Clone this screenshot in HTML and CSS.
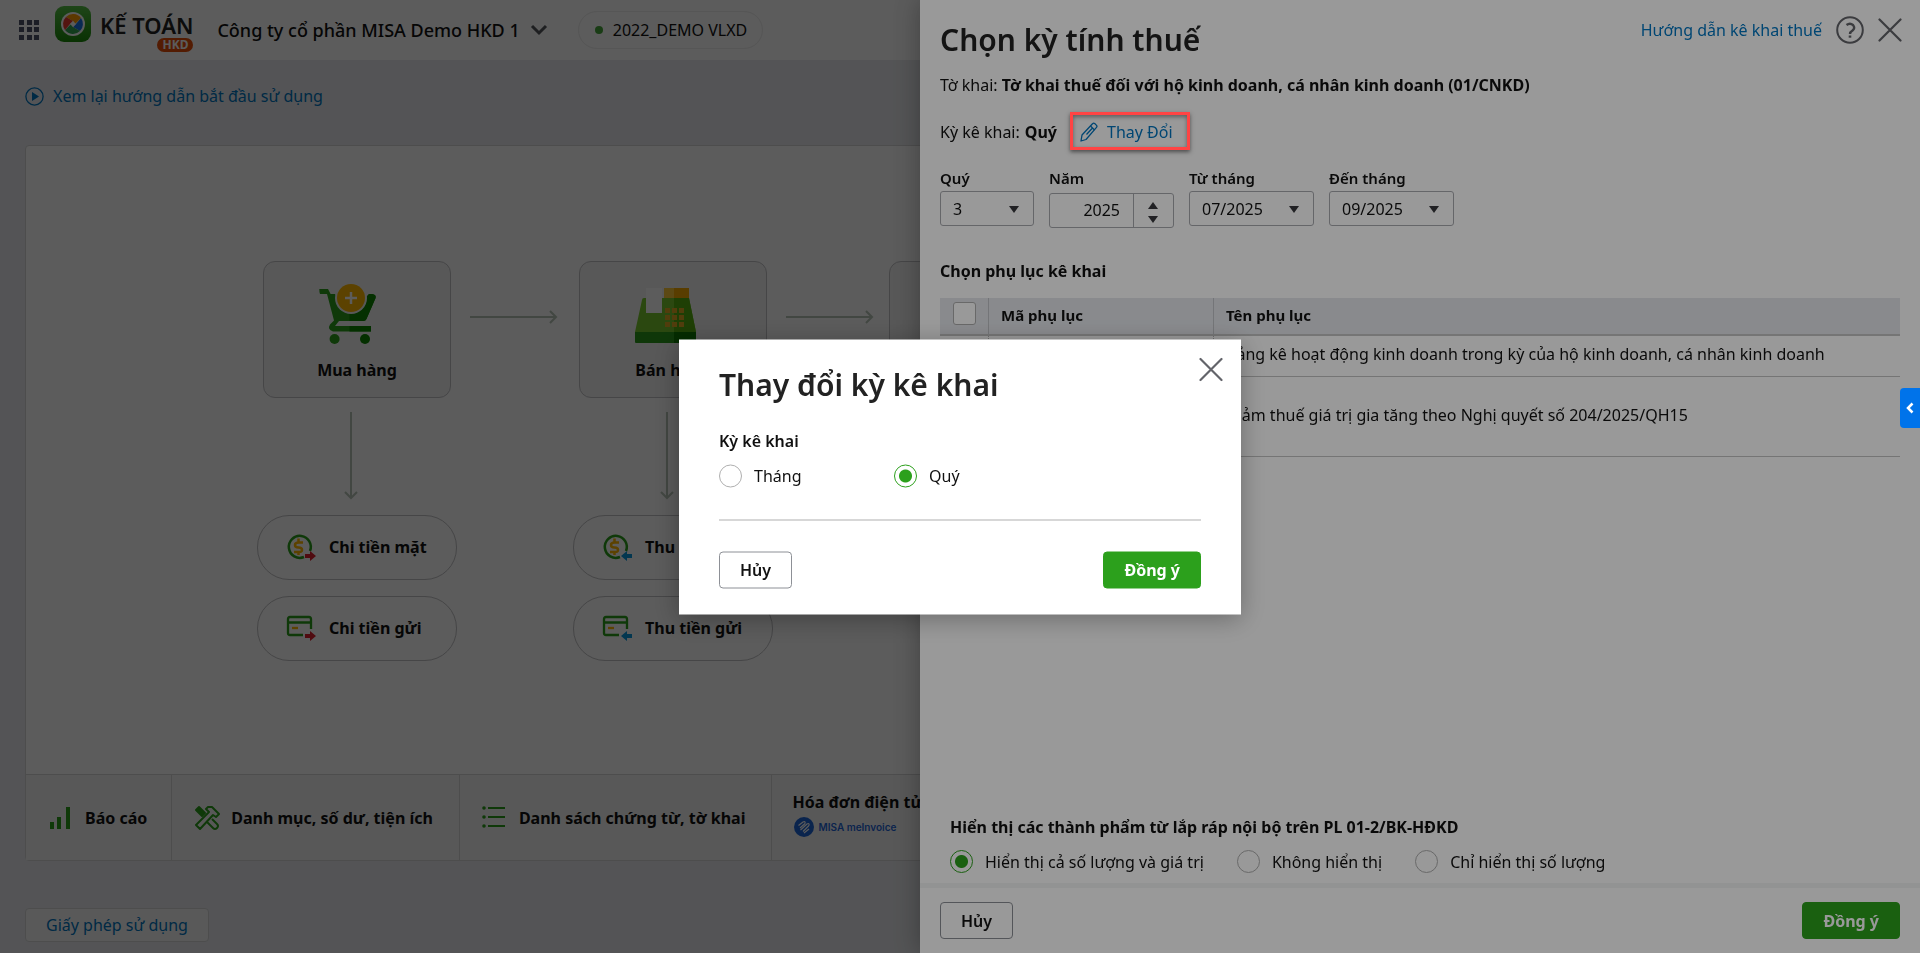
FILE: index.html
```html
<!DOCTYPE html>
<html lang="vi">
<head>
    <meta charset="utf-8">
    <title>Kế toán HKD</title>
    <link rel="stylesheet" href="styles.css">
</head>
<body>
<div class="page">
    <header class="topbar">
        <button class="icon-btn" aria-label="Menu">
            <svg width="22" height="22" viewBox="0 0 22 22" fill="#50556b"><path d="M1 1h5v5H1zM9 1h5v5H9zM16 1h5v5h-5zM1 8h5v5H1zM9 8h5v5H9zM16 8h5v5h-5zM1 16h5v5H1zM9 16h5v5H9zM16 16h5v5h-5z"/></svg>
        </button>
        <a class="logo" href="#">
            <svg width="36" height="36" viewBox="0 0 36 36">
                <defs><linearGradient id="lg" x1="0" y1="0" x2="0" y2="1"><stop offset="0" stop-color="#57c146"/><stop offset="1" stop-color="#1c8a0a"/></linearGradient></defs>
                <rect width="36" height="36" rx="9" fill="url(#lg)"/>
                <circle cx="18" cy="18" r="12" fill="#fff"/>
                <g transform="translate(18 18)">
                    <path d="M-7 -7A10 10 0 0 1 8 -6L2 0 0 -3z" fill="#ff9d00"/>
                    <path d="M8 -6A10 10 0 0 1 7 7L0 3 3 0z" fill="#1a73e8"/>
                    <path d="M7 7A10 10 0 0 1 -8 6L-2 0 0 3z" fill="#34a853"/>
                    <path d="M-8 6A10 10 0 0 1 -7 -7L0 -3 -3 0z" fill="#ea3d2f"/>
                    <path d="M0 -3L3 0 0 3 -3 0z" fill="#fff"/>
                </g>
            </svg>
            <span class="logo-text"><span class="logo-name">KẾ TOÁN</span><span class="logo-badge">HKD</span></span>
        </a>
        <button class="company">Công ty cổ phần MISA Demo HKD 1
            <svg width="18" height="12" viewBox="0 0 18 12" fill="none" stroke="#55575c" stroke-width="3"><path d="M2 2l7 7 7-7"/></svg>
        </button>
        <div class="dataset"><span class="dot"></span>2022_DEMO VLXD</div>
    </header>
    <main class="main">
        <a class="guide link" href="#">
            <svg width="19" height="19" viewBox="0 0 19 19"><circle cx="9.5" cy="9.5" r="8.6" fill="none" stroke="#0075c0" stroke-width="1.3"/><path d="M7 5l7 4.500-7 4.500z" fill="#0075c0"/></svg>
            Xem lại hướng dẫn bắt đầu sử dụng
        </a>
        <section class="board">
            <div class="flow">
                <div class="flow-col">
                    <a class="node" href="#">
                        <svg width="76" height="64" viewBox="1 0 76 64">
                            <path d="M1.300 7H10l2.600 5H17l8 10h17l9-10h3q4.500 .500 3.600 4L48.500 37q-.9 2-3 2H21l-4 5h36v5.600H15q-6-2-3-7l4-4L9 12H2q-.7-1-.7-5z" fill="#2ca01c"/>
                            <path d="M31.500 22H42l9-10h3q4.500 .500 3.600 4L48.500 37q-.9 2-3 2h-14zM31.500 44H53v5.600H31.500z" fill="#0c8600"/>
                            <circle cx="16.600" cy="57" r="5" fill="#2ca01c"/><circle cx="47" cy="57" r="5" fill="#0c8600"/>
                            <circle cx="33" cy="16" r="16" fill="#f6f6f6"/><circle cx="33" cy="16" r="14" fill="#ffb900"/>
                            <path d="M33 10v12M27 16h12" stroke="#fff" stroke-width="2.500"/>
                        </svg>
                        Mua hàng
                    </a>
                    <svg class="down" width="16" height="88" viewBox="0 0 16 88" fill="none" stroke="#b9c7b9" stroke-width="2"><path d="M8 0v86M2 80l6 6 6-6"/></svg>
                    <a class="pill" href="#">
                        <svg width="30" height="28" viewBox="0 0 30 28">
                            <path d="M24 18A11 11 0 1 0 18 24" fill="none" stroke="#2ca01c" stroke-width="2.500"/>
                            <path d="M17 9.500h-4q-4 0-4 2.500t3.500 2.500 3.500 2.500-4 2H8M12.500 5.500v3M12.500 19v3" fill="none" stroke="#ffb900" stroke-width="2.500"/>
                            <path d="M19 21h5v-3l6 5-6 5v-3h-5z" fill="#e0202e"/>
                        </svg>
                        Chi tiền mặt
                    </a>
                    <a class="pill" href="#">
                        <svg width="30" height="28" viewBox="0 0 30 28">
                            <path d="M25 15V5q0-2-2-2H4Q2 3 2 5v14q0 2 2 2h13M2 8.500h23" fill="none" stroke="#2ca01c" stroke-width="2.300"/>
                            <path d="M6 14h6" stroke="#ffb900" stroke-width="2.300"/>
                            <path d="M19 20h5v-3l6 5-6 5v-3h-5z" fill="#e0202e"/>
                        </svg>
                        Chi tiền gửi
                    </a>
                </div>
                <svg class="right" width="88" height="16" viewBox="0 0 88 16" fill="none" stroke="#b9c7b9" stroke-width="2"><path d="M0 8h86M80 2l6 6-6 6"/></svg>
                <div class="flow-col">
                    <a class="node" href="#">
                        <svg width="76" height="64" viewBox="0 5 76 64">
                            <g transform="translate(0 10)">
                                <path d="M7 13q0-2 2-2h45l7 34H0z" fill="#7bc82e"/>
                                <path d="M39 11h15l7 34H39z" fill="#56b010"/>
                                <path d="M0 45h61v11H1q-1 0-1-1z" fill="#2a9c1c"/><path d="M39 45h22v11H39z" fill="#0c7a00"/>
                                <path d="M29 1h10v10H29z" fill="#ffcb3a"/><path d="M39 1h15v10H39z" fill="#f7ab00"/>
                                <path d="M11 1h16v25H11z" fill="#fff"/>
                                <path d="M30 21h5v5h-5zM37 21h5v5h-5zM44 21h5v5h-5zM30 28h5v5h-5zM37 28h5v5h-5zM44 28h5v5h-5zM30 35h5v5h-5zM37 35h5v5h-5zM44 35h5v5h-5z" fill="#e3ac24"/>
                            </g>
                        </svg>
                        Bán hàng
                    </a>
                    <svg class="down" width="16" height="88" viewBox="0 0 16 88" fill="none" stroke="#b9c7b9" stroke-width="2"><path d="M8 0v86M2 80l6 6 6-6"/></svg>
                    <a class="pill" href="#">
                        <svg width="30" height="28" viewBox="0 0 30 28">
                            <path d="M24 18A11 11 0 1 0 18 24" fill="none" stroke="#2ca01c" stroke-width="2.500"/>
                            <path d="M17 9.500h-4q-4 0-4 2.500t3.500 2.500 3.500 2.500-4 2H8M12.500 5.500v3M12.500 19v3" fill="none" stroke="#ffb900" stroke-width="2.500"/>
                            <path d="M30 21h-5v-3l-6 5 6 5v-3h5z" fill="#0a9be0"/>
                        </svg>
                        Thu tiền mặt
                    </a>
                    <a class="pill" href="#">
                        <svg width="30" height="28" viewBox="0 0 30 28">
                            <path d="M25 15V5q0-2-2-2H4Q2 3 2 5v14q0 2 2 2h13M2 8.500h23" fill="none" stroke="#2ca01c" stroke-width="2.300"/>
                            <path d="M6 14h6" stroke="#ffb900" stroke-width="2.300"/>
                            <path d="M30 20h-5v-3l-6 5 6 5v-3h5z" fill="#0a9be0"/>
                        </svg>
                        Thu tiền gửi
                    </a>
                </div>
                <svg class="right" width="88" height="16" viewBox="0 0 88 16" fill="none" stroke="#b9c7b9" stroke-width="2"><path d="M0 8h86M80 2l6 6-6 6"/></svg>
                <div class="flow-last"><div class="node"></div></div>
            </div>
            <nav class="tabs">
                <a class="tab" href="#">
                    <svg width="26" height="26" viewBox="0 0 26 26" fill="#2ca01c"><path d="M2 17h4v7H2zM9 12h4v12H9zM18 2h4v22h-4z"/></svg>
                    Báo cáo
                </a>
                <a class="tab" href="#">
                    <svg width="26" height="26" viewBox="0 0 26 26" fill="none" stroke="#2ca01c" stroke-width="2" stroke-linejoin="round">
                        <path d="M2 20L15 7l-3-3 2-2h4l7 7-3 3-3-2L6 24z"/>
                        <path d="M2 5l3-3 6 6-3 3z" fill="#2ca01c"/><path d="M13 17l6 6q2 2 4 0t0-4l-5-5"/>
                    </svg>
                    Danh mục, số dư, tiện ích
                </a>
                <a class="tab" href="#">
                    <svg width="26" height="26" viewBox="0 0 26 26" fill="#2ca01c"><path d="M6 2h17v2H6zM6 11h17v2H6zM6 20h17v2H6z"/><circle cx="2" cy="3" r="1.800"/><circle cx="2" cy="12" r="1.800"/><circle cx="2" cy="21" r="1.800"/></svg>
                    Danh sách chứng từ, tờ khai
                </a>
                <a class="tab tab-invoice" href="#">
                    Hóa đơn điện tử
                    <span class="meinvoice">
                        <svg width="20" height="20" viewBox="0 0 20 20"><circle cx="10" cy="10" r="10" fill="#1f66d8"/><path d="M4.500 8.500L9 5q1.500-1 2 0t-.5 2L6 11M6.500 13L13 7q1.500-1 2 0t-.5 2L9 14.500M10 16l5-4" stroke="#fff" stroke-width="1.200" fill="none"/></svg>
                        MISA meInvoice
                    </span>
                </a>
            </nav>
        </section>
        <a class="license link" href="#">Giấy phép sử dụng</a>
    </main>
</div>

<div class="overlay"></div>

<aside class="panel">
    <div class="panel-body">
        <div class="panel-head">
            <h1 class="title">Chọn kỳ tính thuế</h1>
            <div class="panel-tools">
                <a class="link" href="#">Hướng dẫn kê khai thuế</a>
                <button class="icon-btn" aria-label="Trợ giúp">
                    <svg width="28" height="28" viewBox="0 0 28 28" fill="none" stroke="#63646a" stroke-width="2"><circle cx="14" cy="14" r="12.800"/><path d="M10.500 9q3.500-2.500 6.500 0 2.500 3-.5 5.500-2.500 1.500-2.500 3.500" stroke-width="2.400"/><path d="M14 19.500v2.200" stroke-width="2.600"/></svg>
                </button>
                <button class="icon-btn" aria-label="Đóng">
                    <svg width="24" height="24" viewBox="0 0 24 24" fill="none" stroke="#63646a" stroke-width="2.200" stroke-linecap="round"><path d="M1.500 1.500l21 21M22.500 1.500l-21 21"/></svg>
                </button>
            </div>
        </div>
        <p class="line">Tờ khai: <b>Tờ khai thuế đối với hộ kinh doanh, cá nhân kinh doanh (01/CNKD)</b></p>
        <p class="line line-period">Kỳ kê khai: <b>Quý</b>
            <a class="change link" href="#">
                <svg width="18" height="20" viewBox="0 0 18 20" fill="none" stroke="#0075c0" stroke-width="1.300" stroke-linejoin="round"><path d="M1 19l1-6L12.500 1.800q1-1.200 2.200-.3l1.600 1.600q1.200 1.200.2 2.300L6 17.500z"/><path d="M10.500 4l4 4M12.500 6l-6 6.500"/></svg>
                Thay Đổi
            </a>
        </p>
        <div class="fields">
            <div class="field">
                <label for="quarter">Quý</label>
                <div class="select select-short">
                    <select id="quarter"><option>3</option></select>
                </div>
            </div>
            <div class="field">
                <label for="year">Năm</label>
                <div class="spinner">
                    <input id="year" type="number" value="2025">
                    <div class="spin">
                        <button aria-label="Tăng"><svg width="10" height="7" viewBox="0 0 10 7"><path d="M0 7l5-7 5 7z" fill="#37383c"/></svg></button>
                        <button aria-label="Giảm"><svg width="10" height="7" viewBox="0 0 10 7"><path d="M0 0h10L5 7z" fill="#37383c"/></svg></button>
                    </div>
                </div>
            </div>
            <div class="field">
                <label for="from">Từ tháng</label>
                <div class="select"><select id="from"><option>07/2025</option></select></div>
            </div>
            <div class="field">
                <label for="to">Đến tháng</label>
                <div class="select"><select id="to"><option>09/2025</option></select></div>
            </div>
        </div>
        <h2 class="subtitle">Chọn phụ lục kê khai</h2>
        <table class="grid">
            <colgroup><col class="c-check"><col class="c-code"><col></colgroup>
            <thead>
                <tr><th class="check"><input type="checkbox" aria-label="Chọn tất cả"></th><th>Mã phụ lục</th><th>Tên phụ lục</th></tr>
            </thead>
            <tbody>
                <tr><td></td><td></td><td>Bảng kê hoạt động kinh doanh trong kỳ của hộ kinh doanh, cá nhân kinh doanh</td></tr>
                <tr class="tall"><td></td><td></td><td>Giảm thuế giá trị gia tăng theo Nghị quyết số 204/2025/QH15</td></tr>
            </tbody>
        </table>
        <fieldset class="display">
            <legend>Hiển thị các thành phẩm từ lắp ráp nội bộ trên PL 01-2/BK-HĐKD</legend>
            <div class="radios">
                <label class="radio"><input type="radio" name="show" checked>Hiển thị cả số lượng và giá trị</label>
                <label class="radio"><input type="radio" name="show">Không hiển thị</label>
                <label class="radio"><input type="radio" name="show">Chỉ hiển thị số lượng</label>
            </div>
        </fieldset>
    </div>
    <footer class="panel-foot">
        <button class="btn">Hủy</button>
        <button class="btn btn-primary">Đồng ý</button>
    </footer>
</aside>

<div class="overlay overlay-top"></div>

<div class="modal" role="dialog" aria-labelledby="modal-title">
    <button class="icon-btn modal-close" aria-label="Đóng">
        <svg width="24" height="24" viewBox="0 0 24 24" fill="none" stroke="#63646a" stroke-width="2.200" stroke-linecap="round"><path d="M1.500 1.500l21 21M22.500 1.500l-21 21"/></svg>
    </button>
    <h1 class="title" id="modal-title">Thay đổi kỳ kê khai</h1>
    <fieldset class="period">
        <legend>Kỳ kê khai</legend>
        <div class="period-options">
            <label class="radio"><input type="radio" name="period">Tháng</label>
            <label class="radio"><input type="radio" name="period" checked>Quý</label>
        </div>
    </fieldset>
    <div class="modal-foot">
        <button class="btn">Hủy</button>
        <button class="btn btn-primary">Đồng ý</button>
    </div>
</div>

<button class="side-tab" aria-label="Mở rộng">
    <svg width="8" height="12" viewBox="0 0 8 12" fill="none" stroke="#fff" stroke-width="2.500"><path d="M6.500 1.500L2 6l4.500 4.500"/></svg>
</button>
</body>
</html>
```
FILE: styles.css
```css
* {
    box-sizing: border-box;
}
body {
    margin: 0;
    font-family: "Noto Sans", sans-serif;
    font-size: 16px;
    line-height: 22px;
    color: #111111;
    background: #e9ecef;
    overflow: hidden;
}
button, input, select {
    font: inherit;
    color: inherit;
}
svg {
    display: block;
    flex: none;
}
a {
    color: inherit;
    text-decoration: none;
}
.link {
    color: #0075c0;
}
.icon-btn {
    padding: 0;
    border: 0;
    background: none;
}

/* page behind */
.page {
    display: flex;
    flex-direction: column;
    height: 100vh;
}
.topbar {
    display: flex;
    align-items: center;
    height: 60px;
    padding: 0 18px;
    background: #ffffff;
    white-space: nowrap;
}
.logo {
    display: flex;
    gap: 9px;
    margin-left: 15px;
    padding-bottom: 2px;
}
.logo-text {
    display: flex;
    flex-direction: column;
    align-items: flex-end;
    padding-top: 7px;
}
.logo-name {
    font-size: 22px;
    line-height: 25px;
    font-weight: 600;
    color: #222222;
}
.logo-badge {
    padding: 0 5px;
    border-radius: 7px;
    background: #e8500a;
    color: #ffffff;
    font-size: 12px;
    line-height: 14px;
    font-weight: 700;
}
.company {
    display: flex;
    align-items: center;
    gap: 10px;
    margin-left: 24px;
    padding: 0;
    border: 0;
    background: none;
    font-size: 18px;
    font-weight: 500;
}
.dataset {
    display: flex;
    align-items: center;
    gap: 10px;
    height: 38px;
    margin-left: 30px;
    padding: 0 15px 0 16px;
    border: 1px solid #eeeeee;
    border-radius: 19px;
}
.dot {
    width: 8px;
    height: 8px;
    border-radius: 50%;
    background: #48a83c;
}
.main {
    flex: 1;
    display: flex;
    flex-direction: column;
    align-items: flex-start;
    padding: 25px 25px 11px;
}
.guide {
    display: flex;
    align-items: center;
    gap: 9px;
    margin-bottom: 38px;
}
.board {
    flex: 1;
    display: flex;
    flex-direction: column;
    align-self: stretch;
    border: 1px solid #d5d5d8;
    border-radius: 4px;
    background: #ffffff;
}
.flow {
    flex: 1;
    display: flex;
    padding: 115px 0 0 231px;
}
.flow-col {
    display: flex;
    flex-direction: column;
    align-items: center;
    width: 200px;
}
.node {
    display: flex;
    flex-direction: column;
    align-items: center;
    gap: 13px;
    width: 188px;
    height: 137px;
    padding-top: 20px;
    border: 1px solid #c3c3c6;
    border-radius: 12px;
    background: #f6f6f6;
    font-weight: 700;
}
.right {
    margin: 48px 15px 0 13px;
}
.down {
    margin: 14px 12px 15px 0;
}
.pill {
    display: flex;
    align-items: center;
    gap: 13px;
    width: 200px;
    height: 65px;
    margin-bottom: 16px;
    padding: 0 0 2px 28px;
    border: 1px solid #c3c3c6;
    border-radius: 32px;
    font-weight: 700;
}
.tabs {
    display: flex;
    height: 86px;
    border-top: 1px solid #d5d5d8;
    background: #f6f6f6;
    font-weight: 700;
}
.tab {
    display: flex;
    align-items: center;
    gap: 11px;
    padding: 0 26px 0 22px;
    border-right: 1px solid #d5d5d8;
    white-space: nowrap;
}
.tab:first-child {
    padding-right: 24px;
}
.tab-invoice {
    flex: 1;
    flex-direction: column;
    align-items: flex-start;
    gap: 4px;
    padding: 16px 20px;
    border-right: 0;
}
.meinvoice {
    display: flex;
    align-items: center;
    gap: 4px;
    padding-left: 2px;
    color: #1f66d8;
    font-family: Inter, sans-serif;
    font-size: 10px;
    line-height: 20px;
    font-weight: 600;
}
.license {
    margin-top: 47px;
    padding: 5px 20px;
    border: 1px solid #d5d5d8;
    border-radius: 4px;
    background: #f9f9f9;
}

.overlay {
    position: fixed;
    inset: 0;
    background: rgba(0, 0, 0, 0.4);
}
.overlay-top {
    z-index: 10;
}

/* right panel, no z-index so that .change::after can rise over the overlay */
.panel {
    position: absolute;
    top: 0;
    right: 0;
    display: flex;
    flex-direction: column;
    width: 1000px;
    max-width: 100%;
    height: 100vh;
    background: #ffffff;
    box-shadow: 0 0 24px rgba(0, 0, 0, 0.3);
}
.panel-body {
    flex: 1;
    display: flex;
    flex-direction: column;
    padding: 16px 20px 10px;
}
.panel-head {
    display: flex;
    justify-content: space-between;
    align-items: flex-start;
}
.title {
    margin: 0;
    padding-top: 4px;
    font-size: 30px;
    line-height: 40px;
    font-weight: 600;
    color: #222222;
}
.panel-tools {
    display: flex;
    align-items: center;
    gap: 14px;
    margin-right: -2px;
}
.line {
    margin: 14px 0 0;
}
.line b {
    font-weight: 700;
}
.line-period {
    display: flex;
    align-items: center;
    gap: 5px;
    margin-top: 25px;
}
.change {
    position: relative;
    display: flex;
    align-items: center;
    gap: 9px;
    margin-left: 18px;
}
.change::after {
    content: "";
    position: absolute;
    z-index: 11;
    inset: -9px -17px -7px -10px;
    border: 3px solid #ff4444;
    box-shadow: 0 2px 4px rgba(0, 0, 0, 0.5), inset 0 2px 4px rgba(0, 0, 0, 0.4);
}
.fields {
    display: flex;
    gap: 15px;
    margin-top: 24px;
}
.field label {
    display: block;
    margin-bottom: 2px;
    font-size: 15px;
    font-weight: 600;
}
.select {
    position: relative;
    width: 125px;
}
.select-short {
    width: 94px;
}
.select select {
    display: block;
    width: 100%;
    height: 35px;
    padding: 0 12px;
    border: 1px solid #a9abb0;
    border-radius: 3px;
    appearance: none;
    background: #ffffff;
}
.select::after {
    content: "";
    position: absolute;
    top: 15px;
    right: 15px;
    border: 5px solid transparent;
    border-top: 7px solid #37383c;
    border-bottom: 0;
}
.spinner {
    display: flex;
    width: 125px;
    height: 35px;
    margin-top: 4px;
    border: 1px solid #a9abb0;
    border-radius: 3px;
}
.spinner input {
    flex: 1;
    min-width: 0;
    padding: 0 13px 2px;
    border: 0;
    background: none;
    text-align: right;
    appearance: textfield;
}
.spinner input::-webkit-inner-spin-button {
    display: none;
}
.spin {
    display: flex;
    flex-direction: column;
    align-items: center;
    justify-content: center;
    gap: 7px;
    width: 40px;
    padding: 4px 2px 0 0;
    border-left: 1px solid #a9abb0;
}
.spin button {
    padding: 0;
    border: 0;
    background: none;
}
.subtitle {
    margin: 32px 0 16px;
    font-size: 16px;
    line-height: 22px;
    font-weight: 700;
}
.grid {
    width: 100%;
    border-collapse: separate;
    border-spacing: 0;
    table-layout: fixed;
}
.c-check {
    width: 49px;
}
.c-code {
    width: 225px;
}
.grid th {
    height: 38px;
    padding: 0 12px 2px;
    border-right: 1px solid #c2c4c8;
    border-bottom: 2px solid #c4c4c4;
    background: #e5e7ec;
    text-align: left;
    font-size: 15px;
    font-weight: 700;
}
.grid th:last-child, .grid td:last-child {
    border-right: 0;
}
.grid td {
    height: 41px;
    padding: 0 12px 4px;
    border-right: 1px dotted #b5b5b5;
    border-bottom: 1px solid #c4c4c4;
}
.grid .tall td {
    height: 80px;
}
.check input {
    display: block;
    width: 23px;
    height: 23px;
    margin: 0 0 4px 1px;
    border: 1px solid #afafaf;
    border-radius: 3px;
    appearance: none;
    background: #ffffff;
}
fieldset {
    margin: 0;
    padding: 0;
    border: 0;
}
legend {
    padding: 0;
    font-weight: 600;
}
.display {
    margin-top: auto;
    padding-left: 10px;
}
.display legend {
    font-weight: 700;
}
.radios {
    display: flex;
    gap: 33px;
    padding-top: 12px;
}
.radio {
    display: flex;
    align-items: center;
    gap: 12px;
}
.radio input {
    width: 23px;
    height: 23px;
    margin: 0;
    border: 1px solid #afafaf;
    border-radius: 50%;
    appearance: none;
    background: #ffffff;
}
.radio input:checked {
    border-color: #2ca01c;
    background: radial-gradient(circle, #2ca01c 6px, #ffffff 7px);
}
.panel-foot {
    display: flex;
    justify-content: space-between;
    padding: 14px 20px;
    border-top: 5px solid #f4f5f6;
}
.btn {
    height: 37px;
    padding: 0 20px;
    border: 1px solid #8d9096;
    border-radius: 4px;
    background: #ffffff;
    font-weight: 600;
}
.btn-primary {
    border-color: #2ca01c;
    background: #2ca01c;
    color: #ffffff;
    font-weight: 700;
}

.modal {
    position: fixed;
    z-index: 20;
    top: 50%;
    left: 50%;
    transform: translate(-50%, -50%);
    width: 562px;
    padding: 21px 40px 26px;
    background: #ffffff;
    box-shadow: 0 4px 24px rgba(0, 0, 0, 0.3);
}
.modal-close {
    position: absolute;
    top: 18px;
    right: 18px;
}
.period {
    margin-top: 25px;
    padding-bottom: 32px;
    border-bottom: 1px solid #afafaf;
}
.period-options {
    display: grid;
    grid-template-columns: 175px 175px;
    padding-top: 13px;
}
.modal-foot {
    display: flex;
    justify-content: space-between;
    padding-top: 31px;
}
.side-tab {
    position: fixed;
    z-index: 20;
    top: 388px;
    right: 0;
    width: 20px;
    height: 40px;
    padding: 0 0 0 6px;
    border: 0;
    border-radius: 4px 0 0 4px;
    background: #0073ea;
}
```
